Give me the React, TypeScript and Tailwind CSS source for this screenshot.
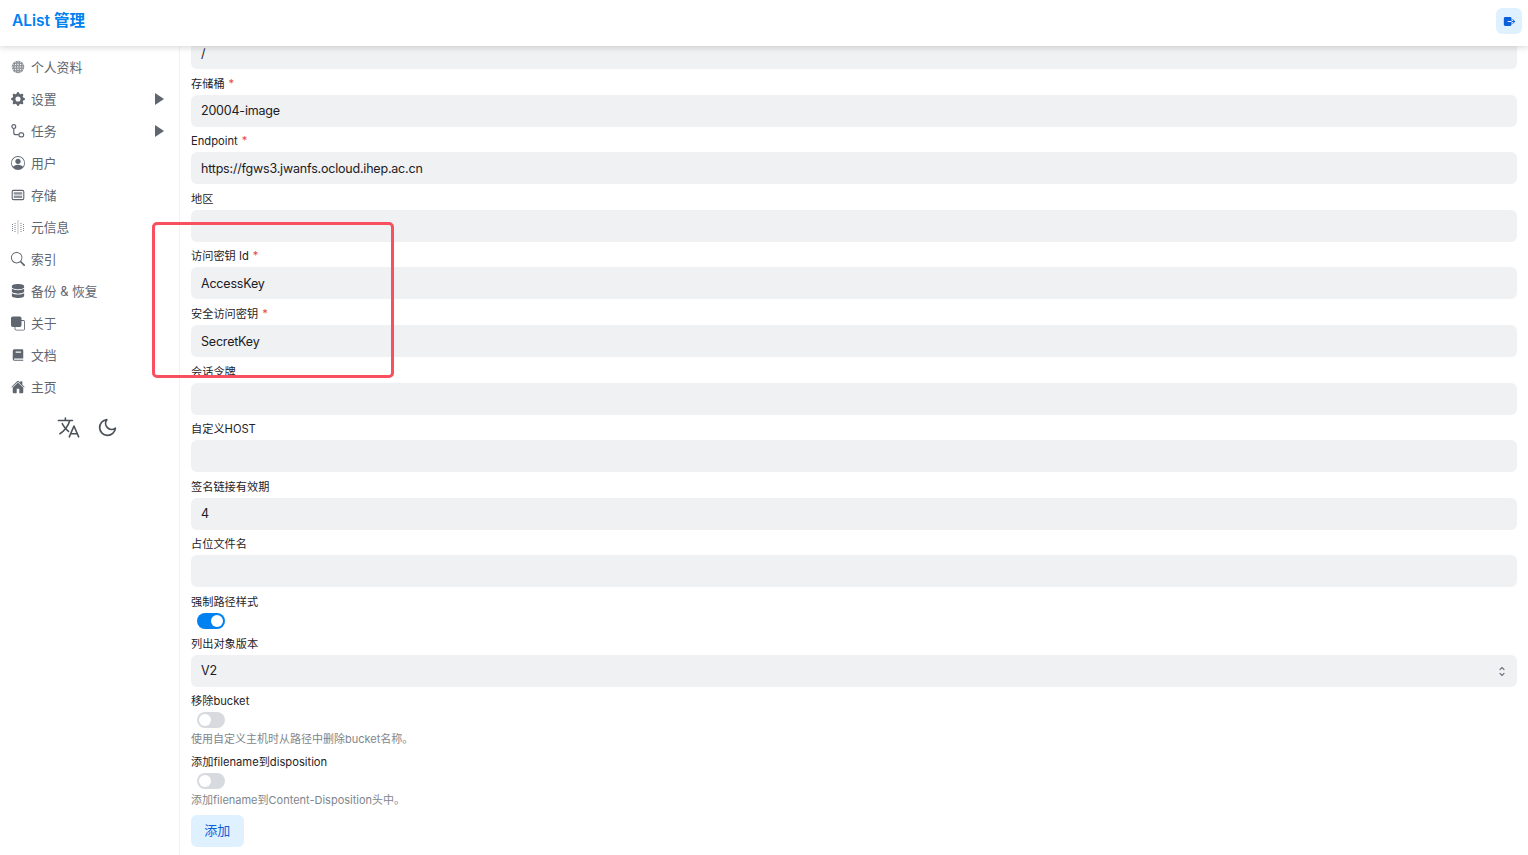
import type { ReactNode } from "react";
import { BiSolidBook } from "react-icons/bi";
import {
  BsFront,
  BsGearFill,
  BsPersonCircle,
  BsSearch,
} from "react-icons/bs";
import { FaDatabase } from "react-icons/fa";
import { FiMoon } from "react-icons/fi";
import { IoHome, IoLanguageOutline, IoExit } from "react-icons/io5";

const fontClass = "font-['Inter','Noto_Sans_CJK_SC',sans-serif]";

function AvatarIcon() {
  return (
    <svg viewBox="0 0 14 14" className="h-[14px] w-[14px] text-[#7c8288]">
      <circle cx="7" cy="7" r="6.2" fill="currentColor" opacity="0.85" />
      <path
        d="M1.5 4.5h11M1 7h12M1.5 9.5h11M4.5 1.5v11M7 1v12M9.5 1.5v11"
        stroke="#fff"
        strokeWidth="0.7"
        strokeDasharray="1.2 1.3"
        fill="none"
      />
    </svg>
  );
}

function TaskIcon() {
  return (
    <svg viewBox="0 0 14 14" className="h-[14px] w-[14px]" fill="none" stroke="currentColor" strokeWidth="1.2">
      <circle cx="2.8" cy="2.6" r="1.9" />
      <path d="M2.8 4.5v4.2a2 2 0 0 0 2 2h3" />
      <rect x="8" y="8.8" width="4.6" height="4" rx="1.6" />
    </svg>
  );
}

function StorageIcon() {
  return (
    <svg viewBox="0 0 14 14" className="h-[14px] w-[14px]" fill="none">
      <rect x="1.2" y="2.4" width="11.6" height="9.2" rx="1.3" stroke="currentColor" strokeWidth="1.1" />
      <rect x="2.8" y="4.2" width="8.4" height="2.4" fill="currentColor" opacity="0.7" />
      <rect x="2.8" y="7.6" width="8.4" height="2.4" fill="currentColor" opacity="0.7" />
    </svg>
  );
}

function MetaIcon() {
  return (
    <svg viewBox="0 0 14 14" className="h-[14px] w-[14px] text-[#7c8288]" fill="none" stroke="currentColor" strokeWidth="1" strokeDasharray="1 1">
      <path d="M1.5 4v7M4 3v9M7 0.5v13M10 3v9M12.5 4v7" />
    </svg>
  );
}

const menu: { label: string; icon: ReactNode; arrow?: boolean }[] = [
  { label: "个人资料", icon: <AvatarIcon /> },
  { label: "设置", icon: <BsGearFill size={14} />, arrow: true },
  { label: "任务", icon: <TaskIcon />, arrow: true },
  { label: "用户", icon: <BsPersonCircle size={14} /> },
  { label: "存储", icon: <StorageIcon /> },
  { label: "元信息", icon: <MetaIcon /> },
  { label: "索引", icon: <BsSearch size={14} /> },
  { label: "备份 & 恢复", icon: <FaDatabase size={14} /> },
  { label: "关于", icon: <BsFront size={15} /> },
  { label: "文档", icon: <BiSolidBook size={18} /> },
  { label: "主页", icon: <IoHome size={14} /> },
];

const inputClass =
  "flex h-[32px] items-center rounded-[6px] bg-[#f0f1f3] px-[10px] pt-[2px] text-[12.5px] tracking-[-0.2px] text-[#1c2024]";

function Label({ text, required }: { text: string; required?: boolean }) {
  return (
    <div className="flex h-[25.6px] items-center pt-[5px] text-[11.2px] leading-none text-[#1f2328]">
      {text}
      {required && <span className="ml-[4px] text-[#e5484d]">*</span>}
    </div>
  );
}

function Field({ label, value, required }: { label: string; value?: string; required?: boolean }) {
  return (
    <div>
      <Label text={label} required={required} />
      <div className={inputClass}>{value}</div>
    </div>
  );
}

function Toggle({ on }: { on?: boolean }) {
  return (
    <div
      className={`ml-[6px] flex h-[16px] w-[27.5px] items-center rounded-full px-[2px] ${
        on ? "justify-end bg-[#0081f1]" : "justify-start bg-[#d7dbdf]"
      }`}
    >
      <div className="h-[12px] w-[12px] rounded-full bg-white" />
    </div>
  );
}

export default function App() {
  return (
    <div className={`relative flex h-[855px] w-[1528px] flex-col overflow-hidden bg-white ${fontClass}`}>
      <header className="relative z-10 flex h-[46px] shrink-0 items-center justify-between bg-white pb-[4px] pl-[12px] pr-[6px] shadow-[0_2px_6px_rgba(0,0,0,0.14)]">
        <span className="text-[15.5px] font-semibold text-[#0081f1]">AList 管理</span>
        <button className="flex h-[26px] w-[26px] items-center justify-center rounded-[6px] bg-[#dff0ff] text-[#0b5fd8]">
          <IoExit size={13} />
        </button>
      </header>

      <div className="flex min-h-0 flex-1">
        <aside className="w-[180px] shrink-0 border-r border-[#f1f3f5] pt-[5px] text-[#5f6670]">
          {menu.map((item) => (
            <div key={item.label} className="flex h-[32px] items-center pl-[11px] pr-[15px] pt-[2px] text-[12.8px]">
              <span className="-mt-[2px] flex w-[14px] justify-center">{item.icon}</span>
              <span className="ml-[6px] flex-1">{item.label}</span>
              {item.arrow && <span className="-mt-[2px] h-0 w-0 border-y-[6px] border-l-[9px] border-y-transparent border-l-[#5f6670]" />}
            </div>
          ))}
          <div className="mt-[12px] flex items-center justify-center gap-[16px] pr-[5px] text-[#4b5158]">
            <IoLanguageOutline size={25} />
            <FiMoon size={21} />
          </div>
        </aside>

        <main className="min-w-0 flex-1 overflow-hidden pl-[11px] pr-[11px]">
          <div className="-mt-[9px]">
            <div className={inputClass}>/</div>
            <Field label="存储桶" value="20004-image" required />
            <Field label="Endpoint" value="https://fgws3.jwanfs.ocloud.ihep.ac.cn" required />
            <Field label="地区" />
            <Field label="访问密钥 Id" value="AccessKey" required />
            <Field label="安全访问密钥" value="SecretKey" required />
            <Field label="会话令牌" />
            <Field label="自定义HOST" />
            <Field label="签名链接有效期" value="4" />
            <Field label="占位文件名" />

            <Label text="强制路径样式" />
            <Toggle on />
            <Label text="列出对象版本" />
            <div className={`${inputClass} justify-between`}>
              V2
              <svg viewBox="0 0 10 14" className="mr-[1px] h-[11px] w-[8px] text-[#5f6670]" fill="none" stroke="currentColor" strokeWidth="1.3">
                <path d="M2 5l3-3 3 3M2 9l3 3 3-3" />
              </svg>
            </div>
            <Label text="移除bucket" />
            <Toggle />
            <p className="mt-[3px] text-[11px] leading-[16px] text-[#7e868c]">使用自定义主机时从路径中删除bucket名称。</p>
            <Label text="添加filename到disposition" />
            <Toggle />
            <p className="mt-[3px] text-[11px] leading-[16px] text-[#7e868c]">添加filename到Content-Disposition头中。</p>
            <button className="mt-[7px] h-[32px] w-[52.5px] rounded-[6px] bg-[#dff0ff] text-[13px] text-[#0b5fd8]">添加</button>
          </div>
        </main>
      </div>

      <div className="absolute left-[152px] top-[222px] z-20 h-[156px] w-[242px] rounded-[5px] border-[3px] border-[#f9505f]" />
    </div>
  );
}
